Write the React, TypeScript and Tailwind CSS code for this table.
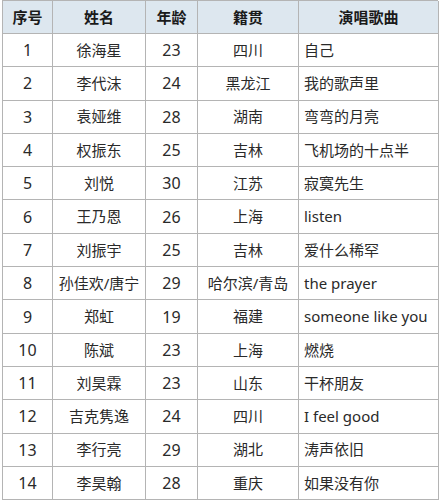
import React from "react";

type Row = [string, string, string, string, string];

const rows: Row[] = [
  ["1", "徐海星", "23", "四川", "自己"],
  ["2", "李代沫", "24", "黑龙江", "我的歌声里"],
  ["3", "袁娅维", "28", "湖南", "弯弯的月亮"],
  ["4", "权振东", "25", "吉林", "飞机场的十点半"],
  ["5", "刘悦", "30", "江苏", "寂寞先生"],
  ["6", "王乃恩", "26", "上海", "listen"],
  ["7", "刘振宇", "25", "吉林", "爱什么稀罕"],
  ["8", "孙佳欢/唐宁", "29", "哈尔滨/青岛", "the prayer"],
  ["9", "郑虹", "19", "福建", "someone like you"],
  ["10", "陈斌", "23", "上海", "燃烧"],
  ["11", "刘昊霖", "23", "山东", "干杯朋友"],
  ["12", "吉克隽逸", "24", "四川", "I feel good"],
  ["13", "李行亮", "29", "湖北", "涛声依旧"],
  ["14", "李昊翰", "28", "重庆", "如果没有你"],
];

const headers = ["序号", "姓名", "年龄", "籍贯", "演唱歌曲"];

const font = {
  fontFamily: '"Noto Sans", "Noto Sans CJK SC", sans-serif',
};

export default function App() {
  return (
    <div className="w-[440px] h-[500px] bg-white overflow-hidden pl-[2px]" style={font}>
      <div className="grid grid-cols-[50px_93px_52px_101px_140px] w-[436px] border-l border-t border-[#b4b4b4]">
        {headers.map((h) => (
          <div
            key={h}
            className="h-[33px] flex items-center justify-center bg-[#dde7ef] border-r border-b border-[#b4b4b4] text-[15px] font-bold text-[#1a1a1a]"
          >
            {h}
          </div>
        ))}
        {rows.map((r) =>
          r.map((c, i) => (
            <div
              key={r[0] + "-" + i}
              className={`h-[33.3px] flex items-center border-r border-b border-[#b4b4b4] text-[#2a2a2a] whitespace-nowrap ${
                i === 4 ? "justify-start pl-[5px] text-[15px]" : "justify-center"
              } ${i === 0 || i === 2 ? "text-[16px]" : ""} ${i === 1 || i === 3 ? "text-[15px]" : ""}`}
            >
              {c}
            </div>
          ))
        )}
      </div>
    </div>
  );
}
